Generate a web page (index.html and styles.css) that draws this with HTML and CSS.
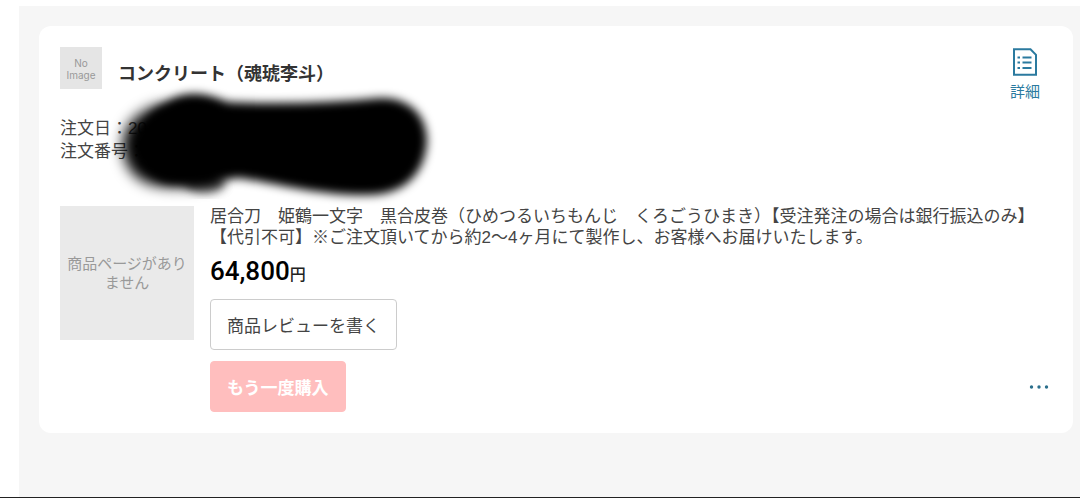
FILE: index.html
```html
<!DOCTYPE html>
<html lang="ja">
<head>
<meta charset="utf-8">
<meta name="viewport" content="width=device-width, initial-scale=1">
<title>注文履歴</title>
<link rel="stylesheet" href="styles.css">
</head>
<body>
<main class="page">
  <article class="card">
    <header class="card-header">
      <div class="shop-image">No<br>Image</div>
      <h1 class="shop-name">コンクリート（魂琥李斗）</h1>
      <a class="detail-link" href="#">
        <svg class="detail-icon" viewBox="0 0 26 28" aria-hidden="true">
          <path d="M2 1.3H18.5L24 6.8V26.7H2Z" fill="none" stroke="currentColor" stroke-width="2"/>
          <path d="M10.5 9.5H19.5M10.5 14.5H19.5M10.5 20H19.5M5.5 9.5H8M5.5 14.5H8M5.5 20H8" fill="none" stroke="currentColor" stroke-width="1.8"/>
        </svg>
        <span>詳細</span>
      </a>
    </header>
    <div class="order-info">
      <p>注文日：20</p>
      <p>注文番号：</p>
      <svg class="redaction" viewBox="0 0 350 130" aria-hidden="true">
        <defs>
          <filter id="soft" x="-20%" y="-30%" width="140%" height="160%"><feGaussianBlur stdDeviation="5"/></filter>
          <filter id="softer" x="-40%" y="-40%" width="180%" height="180%"><feGaussianBlur stdDeviation="7"/></filter>
        </defs>
        <ellipse cx="105" cy="98" rx="20" ry="10" fill="#000" opacity=".6" filter="url(#soft)"/>
        <path filter="url(#softer)" fill="#000" d="M23 60C23 40 38 26 60 20H120V98C100 102 84 103 60 101C36 98 23 82 23 60Z"/>
        <path filter="url(#soft)" fill="#000" d="M44 56C44 32 56 24 66 18C76 11 84 9 95 9C109 9 118 15 128 17C180 19 230 18 280 13C309 12 327 30 327 56C325 90 303 110 268 110C220 111 175 98 139 93C110 97 84 100 66 97C50 92 44 76 44 56Z"/>
      </svg>
    </div>
    <section class="item">
      <div class="item-image">商品ページがありません</div>
      <div class="item-body">
        <p class="item-name">居合刀　姫鶴一文字　黒合皮巻（ひめつるいちもんじ　くろごうひまき）【受注発注の場合は銀行振込のみ】<br>【代引不可】※ご注文頂いてから約2〜4ヶ月にて製作し、お客様へお届けいたします。</p>
        <p class="price">64,800<span class="yen">円</span></p>
        <button class="button button-review" type="button">商品レビューを書く</button>
        <div class="actions">
          <button class="button button-buy" type="button">もう一度購入</button>
          <button class="more" type="button" aria-label="その他">
            <svg class="more-icon" viewBox="0 0 20 4" aria-hidden="true"><g fill="currentColor"><circle cx="2.5" cy="2" r="1.7"/><circle cx="10" cy="2" r="1.7"/><circle cx="17.5" cy="2" r="1.7"/></g></svg>
          </button>
        </div>
      </div>
    </section>
  </article>
</main>
</body>
</html>
```
FILE: styles.css
```css
* {
  box-sizing: border-box;
}

body {
  margin: 0;
  min-height: 100vh;
  display: flex;
  flex-direction: column;
  padding: 6px 0 0 19px;
  background: #fff;
  color: #444;
  font-family: "Liberation Sans", "Noto Sans CJK JP", sans-serif;
  font-size: 17px;
  box-shadow: inset 0 -1px #222;
}

h1,
p {
  margin: 0;
}

.page {
  flex: 1;
  margin-bottom: 1px;
  padding: 20px 7px 20px 20px;
  background: #f6f6f6;
}

.card {
  padding: 21px;
  border-radius: 12px;
  background: #fff;
}

.card-header {
  display: flex;
  align-items: flex-start;
  gap: 16px;
}

.shop-image {
  width: 42px;
  height: 42px;
  padding-top: 10px;
  background: #e5e5e5;
  color: #999;
  font-family: Inter, sans-serif;
  font-size: 10px;
  line-height: 12px;
  text-align: center;
}

.shop-name {
  flex: 1;
  padding-top: 14px;
  color: #333;
  font-size: 18px;
  font-weight: 700;
  line-height: 26px;
}

.detail-link {
  display: flex;
  flex-direction: column;
  align-items: center;
  gap: 5px;
  margin-right: 12px;
  color: #2b7a9f;
  font-size: 15px;
  line-height: 22px;
  text-decoration: none;
}

.detail-icon {
  width: 26px;
  height: 28px;
  margin-top: 1px;
}

.order-info {
  position: relative;
  margin-top: 14px;
  line-height: 23px;
}

.redaction {
  position: absolute;
  top: -32px;
  left: 40px;
  width: 350px;
  height: 130px;
  overflow: visible;
}

.item {
  display: flex;
  align-items: flex-start;
  gap: 16px;
  margin-top: 43px;
}

.item-image {
  display: flex;
  flex: none;
  align-items: center;
  width: 134px;
  height: 134px;
  padding: 0 5px;
  background: #eaeaea;
  color: #999;
  font-size: 15px;
  line-height: 19px;
  text-align: center;
}

.item-body {
  flex: 1;
}

.item-name {
  line-height: 21px;
}

.price {
  margin-top: 8px;
  color: #000;
  font-family: Roboto, "Noto Sans CJK JP", sans-serif;
  font-size: 26px;
  font-weight: 500;
  line-height: 30px;
}

.yen {
  color: #222;
  font-size: 16px;
}

.button {
  height: 51px;
  padding: 0 16px;
  border: 1px solid #ccc;
  border-radius: 4px;
  background: #fff;
  color: #444;
  font: inherit;
}

.button-review {
  display: block;
  margin-top: 9px;
}

.actions {
  display: flex;
  align-items: center;
  justify-content: space-between;
  margin-top: 11px;
}

.button-buy {
  border-color: #ffbebe;
  background: #ffbebe;
  color: #fff;
  font-weight: 700;
}

.more {
  display: flex;
  margin-right: 3px;
  padding: 0;
  border: 0;
  background: none;
  color: #2b6f8c;
}

.more-icon {
  width: 20px;
  height: 4px;
}
```
